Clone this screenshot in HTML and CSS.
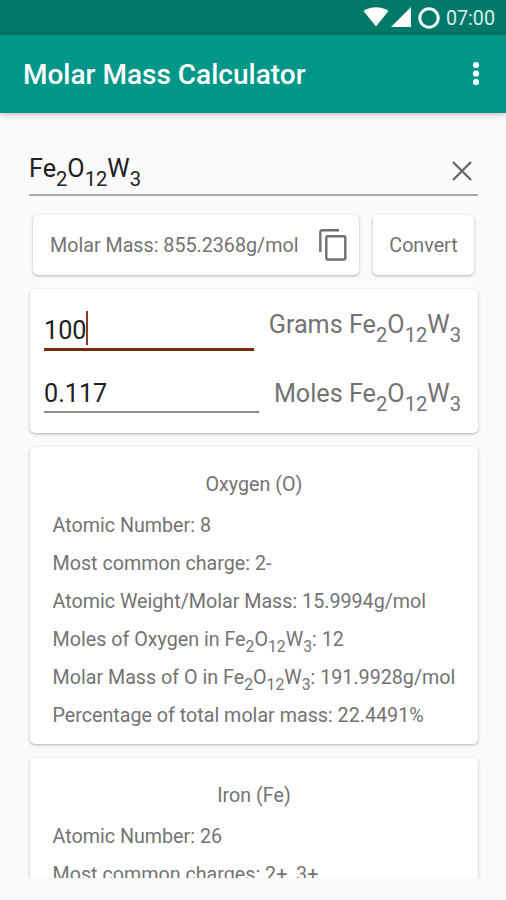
FILE: index.html
```html
<!DOCTYPE html>
<html lang="en">
<head>
<meta charset="utf-8">
<title>Molar Mass Calculator</title>
<link rel="stylesheet" href="styles.css">
</head>
<body>
<div class="status">
  <svg class="wifi" viewBox="0 0 26 20" width="26" height="20"><path d="M0.5 4C8 -1 18 -1 25.5 4L13 19.6z"/></svg>
  <svg class="signal" viewBox="0 0 20 20" width="20" height="20"><path d="M20 0V20H0z"/></svg>
  <svg class="battery" viewBox="0 0 22 22" width="22" height="22"><circle cx="11" cy="11" r="9.2"/></svg>
  <span class="clock">07:00</span>
</div>
<header class="appbar">
  <h1 class="title">Molar Mass Calculator</h1>
  <svg class="more" viewBox="0 0 8 26" width="8" height="26"><circle cx="4" cy="4" r="3.1"/><circle cx="4" cy="12.5" r="3.1"/><circle cx="4" cy="21" r="3.1"/></svg>
</header>
<main class="content">
  <div class="search">
    <span class="formula">Fe<sub>2</sub>O<sub>12</sub>W<sub>3</sub></span>
    <svg class="clear" viewBox="0 0 20 20" width="20" height="20"><path d="M1 1L19 19M19 1L1 19"/></svg>
  </div>
  <div class="actions">
    <div class="card mass"><span class="mass-text">Molar Mass: 855.2368g/mol</span>
      <svg class="copy" viewBox="0 0 28 32" width="28" height="32"><path d="M1.3 23V3.3Q1.3 1.3 3.3 1.3H20"/><rect x="7.3" y="7.3" width="19" height="23.2" rx="1.5"/></svg>
    </div>
    <div class="card convert"><span class="convert-text">Convert</span></div>
  </div>
  <section class="card amounts">
    <div class="amount grams"><span class="input focused"><span class="value">100</span><i class="caret"></i></span><span class="unit grams-unit">Grams Fe<sub>2</sub>O<sub>12</sub>W<sub>3</sub></span></div>
    <div class="amount moles"><span class="input"><span class="value moles-value">0.117</span></span><span class="unit moles-unit">Moles Fe<sub>2</sub>O<sub>12</sub>W<sub>3</sub></span></div>
  </section>
  <section class="card element">
    <h2 class="name">Oxygen (O)</h2>
    <p class="row">Atomic Number: 8</p>
    <p class="row">Most common charge: 2-</p>
    <p class="row">Atomic Weight/Molar Mass: 15.9994g/mol</p>
    <p class="row">Moles of Oxygen in Fe<sub>2</sub>O<sub>12</sub>W<sub>3</sub>: 12</p>
    <p class="row">Molar Mass of O in Fe<sub>2</sub>O<sub>12</sub>W<sub>3</sub>: 191.9928g/mol</p>
    <p class="row">Percentage of total molar mass: 22.4491%</p>
  </section>
  <section class="card element">
    <h2 class="name">Iron (Fe)</h2>
    <p class="row">Atomic Number: 26</p>
    <p class="row">Most common charges: 2+, 3+</p>
  </section>
</main>
</body>
</html>
```
FILE: styles.css
```css
* { box-sizing: border-box; }
body { margin: 0; height: 900px; overflow: hidden; background: #fafafa; color: #737373; font-family: Roboto, sans-serif; font-size: 19.7px; }
h1, h2, p { margin: 0; font-weight: 400; }
svg { display: block; flex: none; }
span { white-space: nowrap; }
sub { font-size: 0.8em; line-height: 0; vertical-align: -0.44em; }

.status { height: 35px; background: #007969; display: flex; align-items: center; justify-content: flex-end; padding-right: 11px; fill: #fff; }
.signal { margin-left: 2px; }
.wifi, .signal { margin-bottom: 1px; }
.battery { margin-left: 7px; fill: none; stroke: #f4fffc; stroke-width: 3; }
.clock { margin: 1px 0 0 6px; color: #d9ede9; font-size: 19.7px; }

.appbar { position: relative; z-index: 1; height: 78px; background: #009688; display: flex; align-items: center; justify-content: space-between; padding: 0 26px 0 23px; box-shadow: 0 1px 6px rgba(0,0,0,.28); }
.title { color: #fff; font-size: 28px; font-weight: 500; line-height: 34px; margin-top: 2px; }
.more { fill: #fff; }

.content { height: 765px; overflow: hidden; padding: 34px 28px 0 30px; }
.search { height: 49px; margin: 0 0 0 -1px; border-bottom: 2px solid #aaa; display: flex; justify-content: space-between; padding: 0 6px 0 0; }
.formula { color: #202020; font-size: 25.2px; line-height: 44px; }
.clear { margin-top: 14px; fill: none; stroke: #686868; stroke-width: 2.4; }

.card { background: #fff; border-radius: 5px; box-shadow: 0 1px 3px rgba(0,0,0,.3); }
.actions { display: flex; gap: 14px; height: 60px; margin: 19px 4px 0 3px; }
.mass { width: 326px; display: flex; align-items: center; justify-content: space-between; padding: 0 12px 0 17px; }
.convert { flex: 1; display: flex; align-items: center; justify-content: center; }
.copy { fill: none; stroke: #707070; stroke-width: 2.4; }

.amounts { height: 144px; margin-top: 14px; padding: 18px 17px 0 14px; font-size: 25.2px; }
.amount { display: flex; justify-content: space-between; }
.grams { height: 44px; }
.input { display: flex; align-items: flex-start; width: 210px; border-bottom: 3px solid #75290d; }
.value { color: #202020; line-height: 47px; }
.caret { width: 2px; height: 34px; margin-top: 4px; background: #8d3a1a; }
.unit { line-height: 36px; }
.moles { height: 44px; margin-top: 18px; }
.moles .input { width: 215px; border-bottom: 2px solid #8d8d8d; }
.moles-value { line-height: 50px; }
.moles-unit { line-height: 50px; }

.element { height: 297px; margin-top: 14px; padding: 19px 22.5px 18px; }
.name { font-size: 19.7px; line-height: 38px; text-align: center; margin-bottom: 3px; }
.row { line-height: 38px; height: 38px; white-space: nowrap; }
.row sub { vertical-align: -0.39em; }
```
